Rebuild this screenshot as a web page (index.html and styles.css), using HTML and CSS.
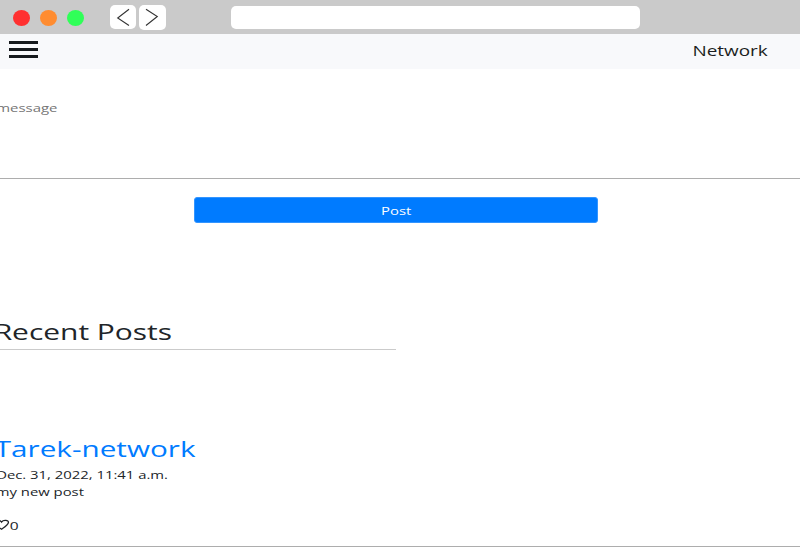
FILE: index.html
```
<!DOCTYPE html>
<html lang="en">
<head>
<meta charset="utf-8">
<title>Network</title>
<link rel="stylesheet" href="styles.css">
</head>
<body>
<header class="chrome">
  <span class="dot red"></span>
  <span class="dot orange"></span>
  <span class="dot green"></span>
  <span class="nav back"><svg width="26" height="24" viewBox="0 0 26 24"><path d="M19 4.2 7.7 13 19 20.5"/></svg></span>
  <span class="nav next"><svg width="27" height="25" viewBox="0 0 27 25"><path d="M7 4.2 18.3 11.5 7 20.5"/></svg></span>
  <span class="address"></span>
</header>
<nav class="topbar">
  <div class="burger"><i></i><i></i><i></i></div>
  <span class="wide brand">Network</span>
</nav>
<main>
  <div class="message"><div class="wide placeholder">message</div></div>
  <button class="post-button"><span class="wide">Post</span></button>
  <section class="recent"><h2 class="wide">Recent Posts</h2></section>
  <article class="post">
    <h3 class="wide">Tarek-network</h3>
    <p class="wide date">Dec. 31, 2022, 11:41 a.m.</p>
    <p class="wide body">my new post</p>
    <div class="likes">
      <svg width="16" height="12" viewBox="0 0 16 12"><path d="M7.5 10.2C4 8.2 1 6.2 1 3.7 1 1 6 .5 7.5 3 9.5.5 14.8 1 14.4 3.7 14 6.2 10.5 8.2 7.5 10.2Z"/></svg>
      <span class="wide">0</span>
    </div>
  </article>
</main>
</body>
</html>
```
FILE: styles.css
```
* { box-sizing: border-box; }
body {
  margin: 0;
  width: 800px;
  height: 550px;
  overflow: hidden;
  background: #fff;
  color: #212529;
  font-family: "Open Sans", "Noto Sans", sans-serif;
}
h2, h3, p { margin: 0; font-weight: 400; }
.wide {
  display: block;
  white-space: nowrap;
  text-align: right;
  transform: scaleX(1.35);
  transform-origin: right center;
}
.chrome {
  display: flex;
  align-items: flex-start;
  height: 34px;
  padding-left: 13px;
  background: #cacaca;
}
.dot { width: 17px; height: 16px; margin: 10px 10px 0 0; border-radius: 50%; }
.red { background: #ff3030; }
.orange { background: #ff8c30; }
.green { background: #30ff58; }
.nav { background: #fff; border-radius: 5px; }
.nav svg { display: block; fill: none; stroke: #333; stroke-width: 1.1; }
.back { width: 26px; height: 24px; margin: 5px 3px 0 16px; }
.next { width: 27px; height: 25px; margin-top: 5px; }
.address { width: 409px; height: 23px; margin: 6px 0 0 65px; border-radius: 5px; background: #fff; }
.topbar {
  display: flex;
  justify-content: space-between;
  height: 35px;
  padding: 0 32px 0 9px;
  background: #f8f9fb;
}
.burger { display: flex; flex-direction: column; gap: 4px; padding-top: 7px; }
.burger i { width: 29px; height: 3px; background: #161a1d; }
.brand { font-size: 14px; line-height: 34px; color: #1b1e21; }
.message { height: 110px; padding-top: 30px; border-bottom: 1px solid #adadad; }
.placeholder { width: 57.5px; font-size: 11.5px; line-height: 18px; color: #757575; transform: scaleX(1.3); }
.post-button {
  display: flex;
  justify-content: center;
  align-items: center;
  width: 404px;
  height: 26px;
  margin: 18px 0 0 194.4px;
  padding: 0;
  border: 1px solid #3395ff;
  border-radius: 3px;
  background: #007bff;
  color: #fff;
  font: 11px "Open Sans", sans-serif;
}
.post-button .wide { transform-origin: center; }
.recent { width: 396.4px; height: 36px; margin-top: 91px; border-bottom: 1px solid #cbcbcb; }
.recent h2 { width: 172px; font-size: 22px; line-height: 34px; transform: scaleX(1.36); }
.post { height: 197px; border-bottom: 1px solid #adadad; padding-top: 83px; }
.post h3 { width: 195.5px; font-size: 21.5px; line-height: 32px; color: #007bff; transform: scaleX(1.38); }
.post .date { width: 168px; font-size: 11px; line-height: 20px; }
.post .body { width: 84px; font-size: 11px; line-height: 13px; }
.likes { display: flex; align-items: center; width: 18.5px; height: 16px; margin-top: 19px; justify-content: flex-end; font-size: 11.5px; }
.likes svg { flex: none; margin-right: 2px; fill: none; stroke: #212529; stroke-width: 1.3; }
```
